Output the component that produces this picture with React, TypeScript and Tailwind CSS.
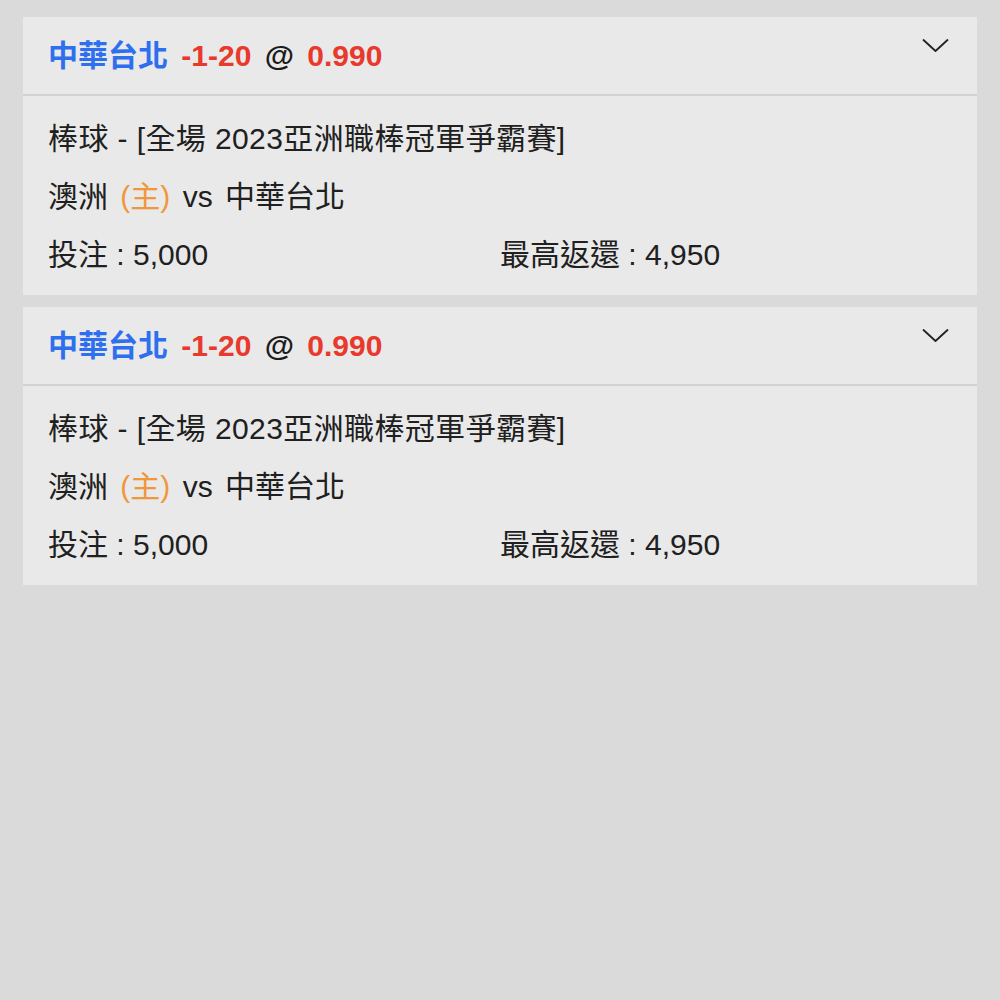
import React from "react";

const font = { fontFamily: '"Liberation Sans", "Noto Sans CJK TC", sans-serif' };

function Card() {
  return (
    <div className="bg-[#e9e9e9]">
      <div className="relative h-[79px] flex items-center pl-[25px] pr-[60px] border-b-2 border-[#d2d2d2]">
        <div className="text-[30px] font-bold leading-none whitespace-nowrap [word-spacing:5px]">
          <span className="text-[#2e6ff0]">中華台北</span>
          <span className="text-[#e8392c]"> -1-20</span>
          <span className="text-[#1c1c1c]"> @ </span>
          <span className="text-[#e8392c]">0.990</span>
        </div>
        <svg
          className="absolute right-[28px] top-[21px]"
          width="27"
          height="16"
          viewBox="0 0 27 16"
          fill="none"
        >
          <path d="M1.5 2 L13.5 13 L25.5 2" stroke="#222" strokeWidth="1.8" strokeLinecap="round" strokeLinejoin="round" />
        </svg>
      </div>
      <div className="pl-[25px] pr-[25px] pt-[14px] pb-[11px] text-[30px] leading-[58px] text-[#202020]">
        <div className="whitespace-nowrap tracking-[0.4px]">棒球 - [全場 2023亞洲職棒冠軍爭霸賽]</div>
        <div className="whitespace-nowrap [word-spacing:4px]">
          澳洲 <span className="text-[#f0973c]">(主)</span> vs 中華台北
        </div>
        <div className="grid grid-cols-[452px_1fr]">
          <div>投注 : 5,000</div>
          <div>最高返還 : 4,950</div>
        </div>
      </div>
    </div>
  );
}

export default function App() {
  return (
    <div className="w-[1000px] h-[1000px] bg-[#dadada] pt-[17px] px-[23px]" style={font}>
      <div className="flex flex-col gap-[12px]">
        <Card />
        <Card />
      </div>
    </div>
  );
}
